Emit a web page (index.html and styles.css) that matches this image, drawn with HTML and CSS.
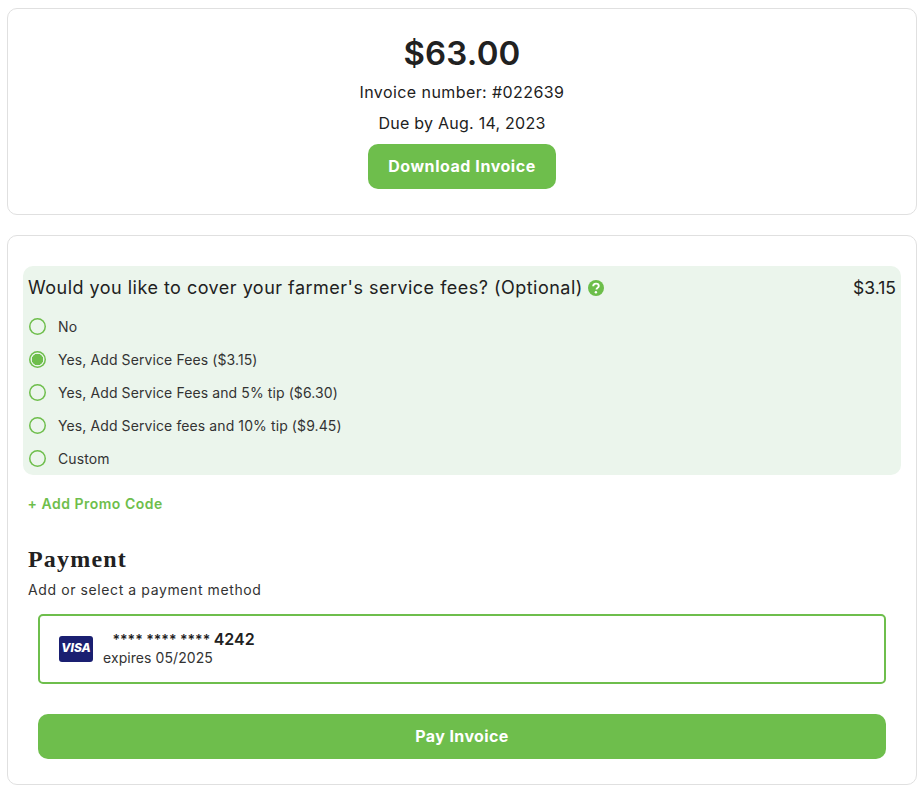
FILE: index.html
```html
<!DOCTYPE html>
<html lang="en">
<head>
<meta charset="utf-8">
<title>Invoice</title>
<link rel="stylesheet" href="styles.css">
</head>
<body>
<main class="page">
  <section class="card summary">
    <h1 class="amount">$63.00</h1>
    <p class="meta meta-first">Invoice number: #022639</p>
    <p class="meta meta-second">Due by Aug. 14, 2023</p>
    <button class="btn btn-download">Download Invoice</button>
  </section>
  <section class="card checkout">
    <div class="fees">
      <div class="fees-head">
        <div class="fees-title">
          <span>Would you like to cover your farmer's service fees? (Optional)</span>
          <svg class="help" viewBox="0 0 16 16" width="16" height="16" aria-hidden="true">
            <circle cx="8" cy="8" r="8" fill="#6cbe4a"/>
            <path d="M5.2 6.2C5.2 4.6 6.5 3.6 8 3.6s2.8.9 2.8 2.4c0 1.1-.7 1.6-1.4 2-.6.4-.9.7-.9 1.4v.2" fill="none" stroke="#fff" stroke-width="1.9"/>
            <circle cx="7.9" cy="12.2" r="1.2" fill="#fff"/>
          </svg>
        </div>
        <span class="fees-price">$3.15</span>
      </div>
      <label class="opt"><span class="radio"></span>No</label>
      <label class="opt"><span class="radio radio-on"></span>Yes, Add Service Fees ($3.15)</label>
      <label class="opt"><span class="radio"></span>Yes, Add Service Fees and 5% tip ($6.30)</label>
      <label class="opt"><span class="radio"></span>Yes, Add Service fees and 10% tip ($9.45)</label>
      <label class="opt"><span class="radio"></span>Custom</label>
    </div>
    <a class="promo">+ Add Promo Code</a>
    <h2 class="pay-title">Payment</h2>
    <p class="pay-sub">Add or select a payment method</p>
    <div class="pay-body">
      <div class="method">
        <svg class="visa" viewBox="0 0 34 26" width="34" height="26" aria-hidden="true">
          <rect width="34" height="26" rx="3" fill="#1a1f71"/>
        </svg>
        <span class="visa-label">VISA</span>
        <div class="method-text">
          <div class="digits"><span class="stars">**** **** ****</span> <b>4242</b></div>
          <div class="expires">expires 05/2025</div>
        </div>
      </div>
      <button class="btn btn-pay">Pay Invoice</button>
    </div>
  </section>
</main>
</body>
</html>
```
FILE: styles.css
```css
* { box-sizing: border-box; }
html, body { margin: 0; background: #fff; }
body {
  font-family: Inter, "Liberation Sans", sans-serif;
  color: #212121;
}
.page {
  padding: 8px 5px 0 7px;
  display: flex;
  flex-direction: column;
  gap: 20px;
}
.card {
  border: 1px solid #e0e0e0;
  border-radius: 10px;
  background: #fff;
}
.summary {
  height: 207px;
  padding-top: 23px;
  display: flex;
  flex-direction: column;
  align-items: center;
}
.amount {
  margin: 0;
  font-size: 33px;
  line-height: 42px;
  font-weight: 600;
  letter-spacing: .2px;
}
.meta {
  margin: 0;
  font-size: 16px;
  line-height: 24px;
}
.meta-first { margin-top: 6px; letter-spacing: .42px; }
.meta-second { margin-top: 7px; letter-spacing: .25px; }
.btn {
  border: 0;
  background: #6ebe4c;
  color: #fff;
  font: 700 16px/20px Inter, "Liberation Sans", sans-serif;
  letter-spacing: .4px;
  border-radius: 10px;
  height: 45px;
  padding: 0 0 2px;
}
.btn-download { width: 188.5px; margin-top: 9px; letter-spacing: .55px; }
.checkout {
  height: 550px;
  padding: 30px 15px 0;
}
.fees {
  background: #ebf5ec;
  border-radius: 10px;
  height: 209px;
  padding: 9px 5px 0;
}
.fees-head {
  display: flex;
  justify-content: space-between;
  align-items: center;
  font-size: 18px;
  line-height: 26px;
}
.fees-title { display: flex; align-items: center; gap: 5px; letter-spacing: .48px; }
.fees-price { letter-spacing: 0; font-size: 17.5px; }
.opt {
  display: flex;
  align-items: center;
  gap: 12.5px;
  height: 33px;
  font-size: 14px;
  letter-spacing: .1px;
  color: #333;
}
.fees-head + .opt { margin-top: 9px; }
.radio {
  width: 17px;
  height: 17px;
  margin-left: .5px;
  border-radius: 50%;
  box-shadow: inset 0 0 0 1.5px #6ebe4c;
  flex: none;
}
.radio-on {
  background: radial-gradient(circle, #6ebe4c 0 5.4px, transparent 6px);
}
.promo {
  display: block;
  margin: 20px 0 0 4.5px;
  font-size: 14px;
  line-height: 18px;
  font-weight: 600;
  letter-spacing: .5px;
  color: #6ebe4c;
}
.pay-title {
  margin: 31px 0 0 5px;
  font: 700 24px/30px "Liberation Serif", serif;
  letter-spacing: 1.2px;
}
.pay-sub {
  margin: 7px 0 0 5px;
  font-size: 14px;
  line-height: 18px;
  letter-spacing: .6px;
  color: #333;
}
.pay-body { padding: 0 15px; margin-top: 15px; }
.method {
  position: relative;
  height: 70px;
  border: 2px solid #6ebe4c;
  border-radius: 5px;
  display: flex;
  align-items: center;
  padding-left: 19px;
  gap: 10px;
}
.visa-label {
  position: absolute;
  left: 21px;
  top: 23px;
  width: 30px;
  text-align: center;
  color: #fff;
  font: italic 800 12px/18px Inter, "Liberation Sans", sans-serif;
}
.method-text { margin-top: -2px; }
.digits { font-size: 16px; line-height: 19px; padding-left: 9.5px; }
.stars { font-size: 14px; font-weight: 600; }
.digits b { font-weight: 600; margin-left: -1px; }
.expires { font-size: 14px; line-height: 18px; color: #333; letter-spacing: .07px; }
.btn-pay { display: block; width: 100%; margin-top: 30px; }
```
